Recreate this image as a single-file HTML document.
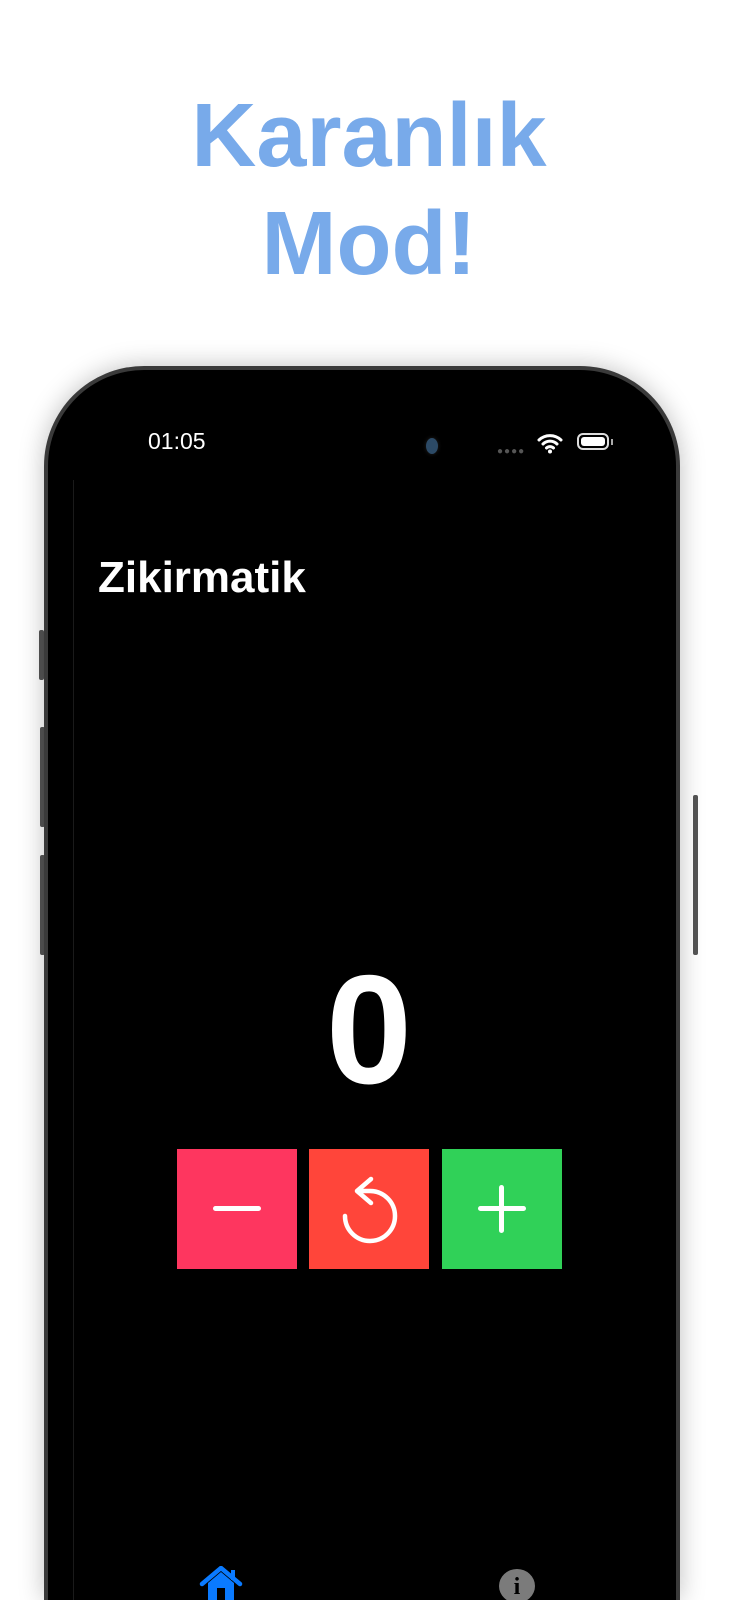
<!DOCTYPE html>
<html><head><meta charset="utf-8"><style>
html,body{margin:0;padding:0;background:#fff;width:738px;height:1600px;overflow:hidden;font-family:"Liberation Sans",sans-serif}
#w{position:relative;width:738px;height:1600px;overflow:hidden}
.h{position:absolute;left:0;width:738px;text-align:center;color:#78aaea;font-weight:bold;font-size:90px;line-height:108px}
.phone{position:absolute;left:44px;top:366px;width:636px;height:1234px;border-radius:100px 100px 0 0;background:#3a3a3a;box-shadow:0 0 25px rgba(0,0,0,.25)}
.screen{position:absolute;left:4px;top:4px;right:4px;bottom:0;border-radius:96px 96px 0 0;background:#000}
.btn{position:absolute;background:#555;width:5px;border-radius:2px}
.sq{position:absolute;top:1149px;width:120px;height:120px}
</style></head><body><div id="w">
<div class="h" style="top:82px">Karanlık</div>
<div class="h" style="top:190px">Mod!</div>
<div class="btn" style="left:39px;top:630px;height:50px"></div>
<div class="btn" style="left:40px;top:727px;height:100px"></div>
<div class="btn" style="left:40px;top:855px;height:100px"></div>
<div class="btn" style="left:693px;top:795px;height:160px"></div>
<div class="phone"><div class="screen"></div></div>
<div style="position:absolute;left:73px;top:480px;width:1px;height:1120px;background:#1a1a1a"></div>
<div style="position:absolute;left:148px;top:428px;color:#fff;font-size:23px">01:05</div>
<div style="position:absolute;left:426px;top:438px;width:12px;height:16px;border-radius:50%;background:#2c4a66;box-shadow:0 0 4px #222"></div>
<div style="position:absolute;left:497px;top:446px;color:#555;font-size:10px;letter-spacing:1px">●●●●</div>
<svg style="position:absolute;left:537px;top:432px" width="26" height="22" viewBox="0 0 26 22"><path d="M2 8a16 16 0 0 1 22 0M6 12a10 10 0 0 1 14 0M9.5 16a5 5 0 0 1 7 0" stroke="#fff" stroke-width="3" fill="none" stroke-linecap="round"/><circle cx="13" cy="19.5" r="2" fill="#fff"/></svg>
<div style="position:absolute;left:577px;top:433px;width:32px;height:17px;border:2px solid #ddd;border-radius:6px;box-sizing:border-box;padding:2px"><div style="background:#fff;width:100%;height:100%;border-radius:3px"></div></div>
<div style="position:absolute;left:611px;top:439px;width:2px;height:6px;background:#aaa"></div>
<div style="position:absolute;left:98px;top:553px;color:#fff;font-size:44px;font-weight:bold">Zikirmatik</div>
<div style="position:absolute;left:0;width:738px;top:955px;text-align:center;color:#fff;font-size:155px;font-weight:bold;line-height:150px">0</div>
<div class="sq" style="left:177px;background:#fe365f"><div style="position:absolute;left:36px;top:57px;width:48px;height:5px;border-radius:3px;background:#fff"></div></div>
<div class="sq" style="left:309px;background:#ff453a"><svg width="120" height="120" viewBox="0 0 120 120"><path d="M48 42H61A25 25 0 1 1 36 67M62 30L48 42L62 54" stroke="#fff" stroke-width="4.5" fill="none" stroke-linecap="round" stroke-linejoin="round"/></svg></div>
<div class="sq" style="left:442px;background:#30d158"><div style="position:absolute;left:36px;top:57px;width:48px;height:5px;border-radius:3px;background:#fff"></div><div style="position:absolute;left:57px;top:36px;width:5px;height:48px;border-radius:3px;background:#fff"></div></div>
<svg style="position:absolute;left:199px;top:1566px" width="44" height="34" viewBox="0 0 44 34"><path d="M3 18L22 2l19 16" stroke="#0a7aff" stroke-width="4.5" fill="none" stroke-linecap="round"/><rect x="32" y="4" width="4" height="10" fill="#0a7aff"/><path d="M9 17L22 6l13 11v17H9z" fill="#0a7aff"/><rect x="18" y="22" width="8" height="12" fill="#000"/></svg>
<div style="position:absolute;left:499px;top:1569px;width:36px;height:34px;border-radius:50%;background:#7b7b7b;color:#000;text-align:center;font:bold 24px/36px 'Liberation Serif',serif;overflow:hidden">i</div>
</div></body></html>
